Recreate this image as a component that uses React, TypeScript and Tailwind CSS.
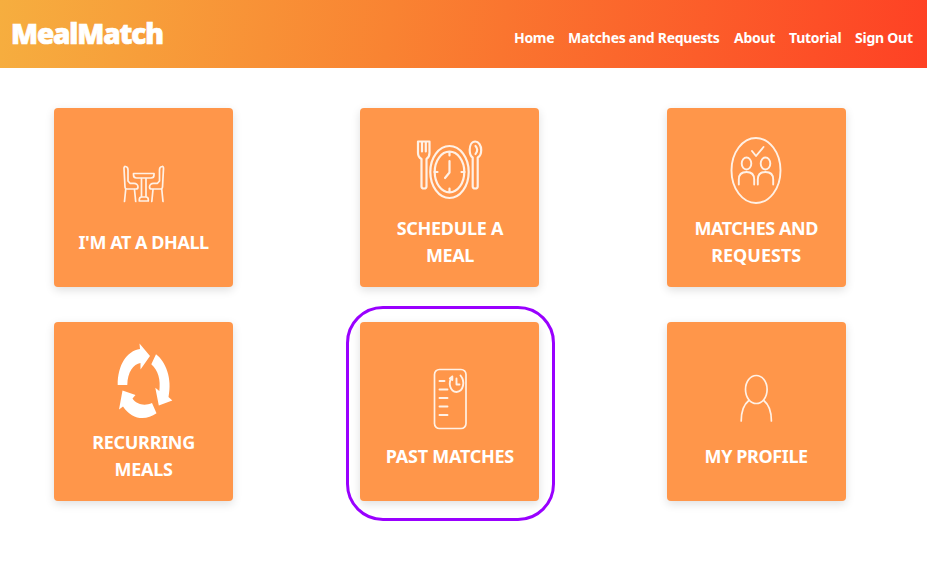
import type { ReactNode } from 'react';

type Word = { text: string; className: string };

const nav: Word[] = [
  { text: 'Home', className: 'w-[40px] tracking-[-0.3px]' },
  { text: 'Matches and Requests', className: 'w-[152px] tracking-[-0.27px]' },
  { text: 'About', className: 'w-[41px] tracking-[-0.3px]' },
  { text: 'Tutorial', className: 'w-[52px] tracking-[-0.25px]' },
  { text: 'Sign Out', className: 'w-[58px] tracking-[-0.25px]' },
];

function Card({ lines, children }: { lines: Word[]; children: ReactNode }) {
  return (
    <div className="flex h-[178.500px] w-[179px] flex-col rounded-[4px] bg-[#ff964a] shadow-[0_3px_10px_rgba(0,0,0,0.13)]">
      <svg
        className="h-[107px] w-[179px] shrink-0 overflow-visible"
        viewBox="0 0 179 107"
        fill="none"
        stroke="#fff1e6"
        strokeWidth="1.7"
        strokeLinecap="round"
        strokeLinejoin="round"
      >
        {children}
      </svg>
      <div className="flex h-[54px] flex-col items-center justify-center text-[18px] leading-[27px] font-bold text-white">
        {lines.map((l) => (
          <span key={l.text} className={`whitespace-nowrap ${l.className}`}>
            {l.text}
          </span>
        ))}
      </div>
    </div>
  );
}

function Chair() {
  return (
    <>
      <path d="M71.500 58.500c-1-.2-1.600.7-1.500 2l1 18.500c.1 1.200.8 2 2 2h9c1.400 0 2-.8 2-2 0-2.200-1.800-3.700-4-3.700h-4l-2-2.300v-11c0-2-.9-3.300-2.500-3.500z" />
      <path d="M71.700 81.500l-1.200 12M80.500 81.500l1.200 12" />
    </>
  );
}

export default function App() {
  return (
    <div className="h-[566px] w-full overflow-hidden bg-white font-['Noto_Sans',sans-serif]">
      <header className="flex h-[68px] w-[927px] items-center justify-between bg-linear-[98deg,#f6ae3f,#f98332_42%,#fe4124] pr-[14px] pl-[11px] text-white">
        <h1 className="pb-[2px] text-[28px] leading-[66px] font-black tracking-[-1.15px] [-webkit-text-stroke:0.7px_white]">
          MealMatch
        </h1>
        <nav className="flex gap-[14px] pt-[6px] text-[14px] font-bold whitespace-nowrap">
          {nav.map((n) => (
            <a key={n.text} className={n.className}>
              {n.text}
            </a>
          ))}
        </nav>
      </header>

      <main className="grid grid-cols-[179px_179px_179px] gap-x-[127.300px] gap-y-[35.500px] pt-[40px] pl-[54.100px]">
        <Card lines={[{ text: "I'M AT A DHALL", className: 'tracking-[-0.45px]' }]}>
          <Chair />
          <g transform="matrix(-1 0 0 1 179.500 0)">
            <Chair />
          </g>
          <path d="M79.500 65.500h20.500v1.500q0 3-3 3h-14.500q-3 0-3-3z" />
          <path d="M87.500 70.500v18M92 70.500v18M85.300 93v-1.500q0-2.500 2.500-2.500h4q2.500 0 2.500 2.500v1.500z" />
        </Card>

        <Card
          lines={[
            { text: 'SCHEDULE A', className: 'tracking-[-0.3px]' },
            { text: 'MEAL', className: 'tracking-[-0.4px]' },
          ]}
        >
          <g strokeWidth="2.200">
            <path d="M58 33.500h11.500v11.500q0 4-3 6v27.500q0 2-2.500 2t-2.500-2v-27.500q-3.500-2-3.500-6zM62 34v9.500M65.800 34v9.500" />
            <ellipse cx="89.500" cy="64" rx="19.200" ry="26" />
            <ellipse cx="89.500" cy="64" rx="14.800" ry="20.300" />
            <path d="M89.500 44v3.500M89.500 80.500v3.500M74.500 64h3M101.500 64h3M89.500 53v11.500l-4.500 5.500" />
            <path d="M115.200 33.500c-3.500 0-5.500 4-5.500 8.500 0 4 1.300 6.500 3 7.500v29q0 2 2.500 2t2.500-2v-29c2-1 3.500-3.500 3.500-7.500 0-4.500-2.500-8.500-6-8.500zM115.500 38c2 2 2.500 5.500 0 8" />
          </g>
        </Card>

        <Card
          lines={[
            { text: 'MATCHES AND', className: 'tracking-[-0.45px]' },
            { text: 'REQUESTS', className: '' },
          ]}
        >
          <g strokeWidth="1.900">
            <ellipse cx="89" cy="62.500" rx="24.500" ry="32.500" />
            <ellipse cx="79.500" cy="55.500" rx="4.800" ry="6" />
            <ellipse cx="98.500" cy="55.500" rx="4.800" ry="6" />
            <path d="M71.800 76.500v-5q0-7.500 7.700-7.500t7.700 7.500v5M90.800 76.500v-5q0-7.500 7.700-7.500t7.700 7.500v5M85 43l4 5 7.500-9" />
          </g>
        </Card>

        <Card
          lines={[
            { text: 'RECURRING', className: 'tracking-[-0.3px]' },
            { text: 'MEALS', className: 'tracking-[-0.3px]' },
          ]}
        >
          <g fill="#fff" stroke="none">
            <path d="M63.700 63c0-20 9-34 22.300-36l-.5-5.500 10.500 12.500-9.500 13.500v-6.500c-7 1-13 9-13.200 22z" />
            <path d="M102 32.300c9.500 7 16.500 24 12.500 42.700l3.800 3.500-13.500 5-3.500-17.800 4 3.300c1.500-11-1-20.500-8-26.700z" />
            <path d="M68.500 68.500l13 4.500-3 3.500c4 6 12 7.800 19.500 4.500l4.500 10.300c-11 8-25 6.200-33.500-6.800l-4 3z" />
          </g>
        </Card>

        <div className="relative">
          <Card lines={[{ text: 'PAST MATCHES', className: 'tracking-[-0.25px]' }]}>
            <rect x="74.500" y="47.500" width="31.500" height="59" rx="5" />
            <g strokeWidth="1.900">
              <path d="M79.500 59h5M79.500 67.500h8M79.500 76h8M79.500 84.500h8M79.500 93h8" />
              <path d="M92.300 54.500c-5 6.500-2 15 4.200 15.500 7-.5 9-10.500 4-16.500M89.800 56.500l2.500-2v3.500M96.500 56.500v6h3" />
            </g>
          </Card>
          <div className="pointer-events-none absolute -top-[16px] -left-[14.400px] h-[215px] w-[209px] rounded-[37px] border-[3px] border-[#9900ff]" />
        </div>

        <Card lines={[{ text: 'MY PROFILE', className: 'tracking-[-0.4px]' }]}>
          <ellipse cx="89.300" cy="67.500" rx="10.800" ry="14" />
          <path d="M81.800 78.500c-5 4-7.600 12-7.600 20.500M96.800 78.500c5 4 7.600 12 7.600 20.500" />
        </Card>
      </main>
    </div>
  );
}
